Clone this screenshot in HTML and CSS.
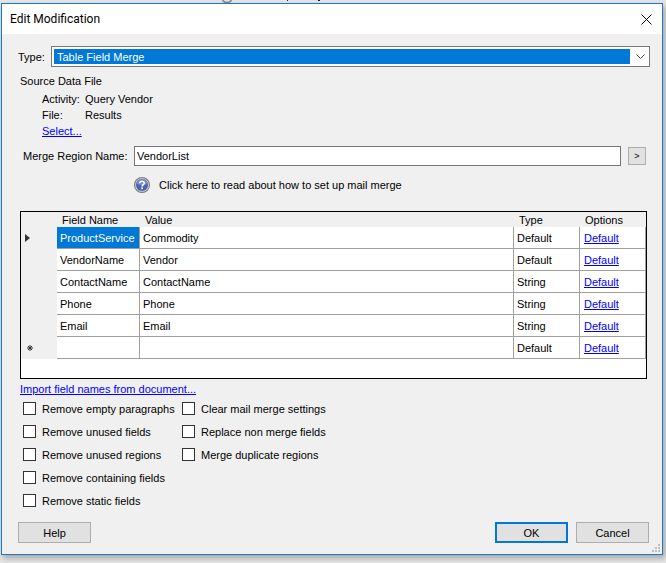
FILE: index.html
```html
<!DOCTYPE html>
<html lang="en">

<head>
    <meta charset="utf-8">
    <title>Edit Modification</title>
    <link rel="stylesheet" href="styles.css">
</head>

<body>
    <!-- edge of the window behind the dialog -->
    <svg class="behind" width="110" height="3" viewBox="0 0 110 3"><path d="M1.500 0Q3 2.500 6 2.500T10.500 0" stroke="#888" stroke-width="1.500" fill="none"/><path d="M66 0h1v1h-1zM97 0h2v1h-2z" fill="#222"/></svg>
    <form class="dialog">
        <div class="titlebar">
            <h1>Edit Modification</h1>
            <button type="button" class="close" aria-label="Close">
                <svg width="11" height="11" viewBox="0 0 11 11"><path d="M0.5 0.5L10.5 10.5M10.5 0.5L0.5 10.5" stroke="#000" fill="none"/></svg>
            </button>
        </div>

        <div class="content">
            <div class="type-row">
                <label for="type">Type:</label>
                <div class="combo">
                    <select id="type">
                        <option>Table Field Merge</option>
                    </select>
                    <svg class="arrow" width="9" height="6" viewBox="0 0 9 6"><path d="M0.5 0.5L4.5 4.5L8.5 0.5" stroke="#444" fill="none"/></svg>
                </div>
            </div>

            <div class="source">
                <h2>Source Data File</h2>
                <dl>
                    <dt>Activity:</dt>
                    <dd>Query Vendor</dd>
                    <dt>File:</dt>
                    <dd>Results</dd>
                </dl>
                <a href="#" class="select-link">Select...</a>
            </div>

            <div class="region-row">
                <label for="region">Merge Region Name:</label>
                <input type="text" id="region" value="VendorList">
                <button type="button" class="more">&gt;</button>
            </div>

            <a href="#" class="help-link">
                <svg width="16" height="16" viewBox="0 0 16 16">
                    <circle cx="8" cy="8" r="8" fill="#777"/>
                    <circle cx="8" cy="8" r="7" fill="#ccc"/>
                    <circle cx="8" cy="8" r="6" fill="#4664b4"/>
                    <path d="M2.5 7a5.5 5 0 0 1 11 0Q8 9 2.5 7z" fill="#7388c8"/>
                    <path d="M5.7 6.3Q5.8 4.2 8 4.2T10.3 6.1Q10.3 7.1 9.1 7.8Q8.1 8.4 8.1 9.5" stroke="#fff" stroke-width="1.6" fill="none"/>
                    <rect x="7.2" y="10.4" width="1.8" height="1.8" fill="#fff"/>
                </svg>
                <span>Click here to read about how to set up mail merge</span>
            </a>

            <div class="grid">
                <table>
                    <thead>
                        <tr>
                            <th class="marker"></th>
                            <th class="name">Field Name</th>
                            <th>Value</th>
                            <th class="kind">Type</th>
                            <th class="kind">Options</th>
                        </tr>
                    </thead>
                    <tbody>
                        <tr>
                            <th class="marker"><svg width="6" height="10" viewBox="0 0 6 10"><path d="M0 1L5 5L0 9z" fill="#333"/></svg></th>
                            <td class="selected">ProductService</td>
                            <td>Commodity</td>
                            <td>Default</td>
                            <td><a href="#">Default</a></td>
                        </tr>
                        <tr>
                            <th class="marker"></th>
                            <td>VendorName</td>
                            <td>Vendor</td>
                            <td>Default</td>
                            <td><a href="#">Default</a></td>
                        </tr>
                        <tr>
                            <th class="marker"></th>
                            <td>ContactName</td>
                            <td>ContactName</td>
                            <td>String</td>
                            <td><a href="#">Default</a></td>
                        </tr>
                        <tr>
                            <th class="marker"></th>
                            <td>Phone</td>
                            <td>Phone</td>
                            <td>String</td>
                            <td><a href="#">Default</a></td>
                        </tr>
                        <tr>
                            <th class="marker"></th>
                            <td>Email</td>
                            <td>Email</td>
                            <td>String</td>
                            <td><a href="#">Default</a></td>
                        </tr>
                        <tr>
                            <th class="marker"><svg width="9" height="6" viewBox="0 0 9 6"><path d="M5 0V6M3 1L7 5M7 1L3 5M2 3H8" stroke="#333" fill="none"/></svg></th>
                            <td></td>
                            <td></td>
                            <td>Default</td>
                            <td><a href="#">Default</a></td>
                        </tr>
                    </tbody>
                </table>
            </div>

            <a href="#" class="import-link">Import field names from document...</a>

            <div class="options">
                <div class="column">
                    <label><input type="checkbox">Remove empty paragraphs</label>
                    <label><input type="checkbox">Remove unused fields</label>
                    <label><input type="checkbox">Remove unused regions</label>
                    <label><input type="checkbox">Remove containing fields</label>
                    <label><input type="checkbox">Remove static fields</label>
                </div>
                <div class="column">
                    <label><input type="checkbox">Clear mail merge settings</label>
                    <label><input type="checkbox">Replace non merge fields</label>
                    <label><input type="checkbox">Merge duplicate regions</label>
                </div>
            </div>

            <div class="buttons">
                <button type="button" class="help">Help</button>
                <button type="submit" class="ok">OK</button>
                <button type="button">Cancel</button>
            </div>
        </div>

        <svg class="grip" width="8" height="8" viewBox="0 0 8 8"><path d="M6 0h2v2H6zM3 3h2v2H3zM6 3h2v2H6zM0 6h2v2H0zM3 6h2v2H3zM6 6h2v2H6z" fill="#bfbfbf"/></svg>
    </form>
</body>
</html>
```
FILE: styles.css
```css
* {
    box-sizing: border-box;
}

body {
    margin: 0;
    padding: 3px 3px 8px 1px;
    background-color: #e6e6e6;
    font-family: "Liberation Sans", Arial, sans-serif;
    font-size: 11px;
    line-height: 16px;
    color: #000;
}

button, input, select {
    font: inherit;
    color: inherit;
    margin: 0;
}

h1, h2, dl, dd {
    margin: 0;
    font-size: inherit;
    font-weight: normal;
}

a {
    color: #00f;
}

.behind {
    position: absolute;
    top: 0;
    left: 221px;
}

.dialog {
    position: relative;
    border: 1px solid #1979ca;
    background-color: #f0f0f0;
    box-shadow: 2px 3px 6px rgba(0, 0, 0, 0.3);
}

.titlebar {
    display: flex;
    justify-content: space-between;
    align-items: center;
    height: 30px;
    padding: 0 10px 0 8px;
    background-color: #fff;
}

.titlebar h1 {
    font-family: Roboto, sans-serif;
    font-size: 12px;
}

.close {
    display: flex;
    padding: 0;
    border: none;
    background: none;
}

.content {
    padding: 12px 12px 11px 16px;
}

.type-row {
    display: flex;
    align-items: center;
    gap: 6px;
}

.type-row label {
    width: 27px;
}

.combo {
    position: relative;
    flex: 1;
    height: 21px;
    padding: 2px 19px 2px 2px;
    border: 1px solid #777;
    background-color: #fff;
}

.combo select {
    display: block;
    appearance: none;
    width: 100%;
    height: 15px;
    padding: 1px 3px 0;
    border: none;
    border-radius: 0;
    background-color: #0078d7;
    color: #fff;
    line-height: 14px;
}

.arrow {
    position: absolute;
    top: 7px;
    right: 4px;
    pointer-events: none;
}

.source {
    padding: 6px 2px 0;
}

.source dl {
    display: grid;
    grid-template-columns: 43px 1fr;
    padding: 2px 0 0 22px;
}

.select-link {
    display: inline-block;
    margin-left: 22px;
}

.region-row {
    display: flex;
    align-items: center;
    padding: 7px 4px 0 5px;
}

.region-row label {
    width: 111px;
}

.region-row input {
    flex: 1;
    min-width: 0;
    height: 20px;
    padding: 0 2px;
    border: 1px solid #777;
    background-color: #fff;
}

.more {
    width: 18px;
    height: 18px;
    margin-left: 7px;
    padding: 0;
    border: 1px solid #adadad;
    background-color: #e1e1e1;
    font-size: 9px;
    line-height: 16px;
}

.help-link {
    display: flex;
    align-items: center;
    gap: 9px;
    width: fit-content;
    margin: 11px 0 18px 116px;
    color: #000;
    text-decoration: none;
}

.grid {
    margin: 0 3px 0 2px;
    padding-bottom: 19px;
    border: 1px solid #000;
    background-color: #fff;
}

table {
    width: 100%;
    border-collapse: separate;
    border-spacing: 0;
    table-layout: fixed;
}

th {
    height: 15px;
    padding: 1px 5px 0;
    background-color: #f0f0f0;
    font-weight: normal;
    text-align: left;
    line-height: 14px;
}

td {
    height: 22px;
    padding: 0 3px;
    border-right: 1px solid #a0a0a0;
    border-bottom: 1px solid #a0a0a0;
}

td:last-child {
    padding-left: 4px;
}

.marker {
    width: 36px;
    padding: 0 4px;
}

.name {
    width: 83px;
}

.kind {
    width: 66px;
}

.marker svg {
    display: block;
}

.selected {
    background-color: #0078d7;
    color: #fff;
}

.import-link {
    display: block;
    width: fit-content;
    margin: 2px 2px 0;
}

.options {
    display: flex;
    padding: 0 5px;
}

.column {
    width: 159px;
}

.column label {
    display: flex;
    align-items: center;
    gap: 6px;
    height: 23px;
    white-space: nowrap;
}

.column input {
    appearance: none;
    width: 13px;
    height: 13px;
    border: 1px solid #333;
    background-color: #fff;
}

.buttons {
    display: flex;
    gap: 8px;
    margin: 10px 1px 0 0;
}

.buttons button {
    width: 73px;
    height: 21px;
    padding: 0;
    border: 1px solid #adadad;
    background-color: #e1e1e1;
}

.buttons .help {
    margin-right: auto;
}

.buttons .ok {
    border: 2px solid #0078d7;
}

.grip {
    position: absolute;
    right: 2px;
    bottom: 2px;
}
```
